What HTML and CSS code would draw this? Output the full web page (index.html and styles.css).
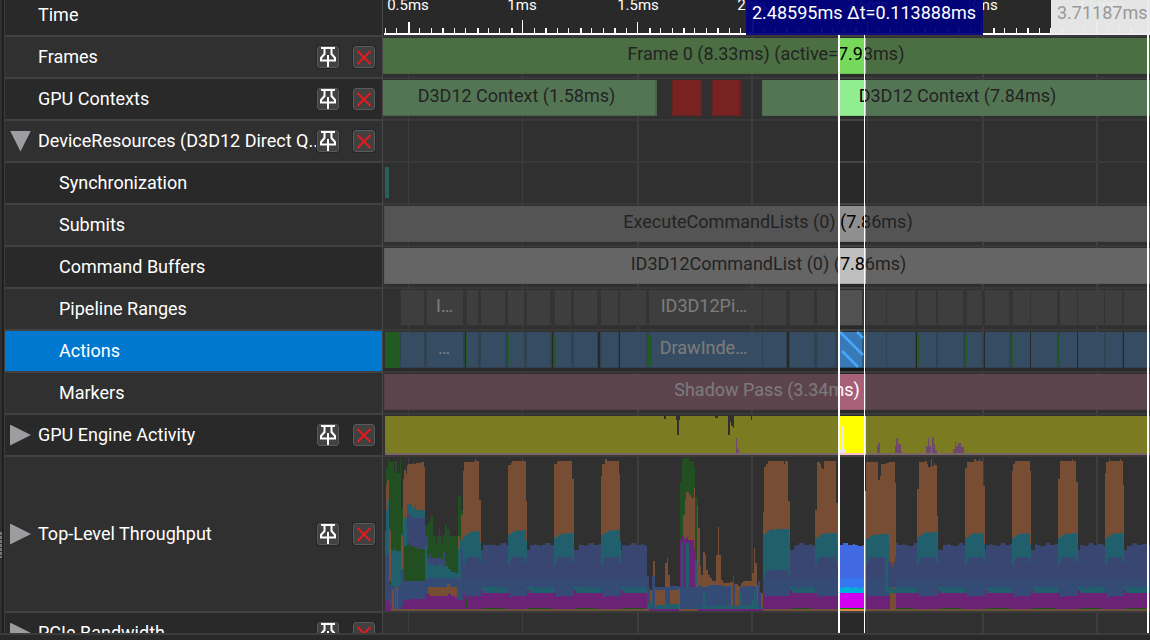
FILE: index.html
```html
<!DOCTYPE html>
<html lang="en">
<head>
<meta charset="utf-8">
<title>GPU Timeline</title>
<link rel="stylesheet" href="styles.css">
</head>
<body>
<svg class="defs" aria-hidden="true">
  <symbol id="pin" viewBox="0 0 20 20">
    <path d="M3 1h14M6.500 1.500v5.500L3 11v2.500h14V11l-3.500-4V1.500M10 8v12" fill="none" stroke="#fff" stroke-width="2"/>
  </symbol>
  <symbol id="cross" viewBox="0 0 20 20">
    <path d="M3.500 4l13 13M16.500 4L3.500 17" fill="none" stroke="#e8191c" stroke-width="2"/>
  </symbol>
</svg>
<main class="board">
  <div class="rail"><span class="grip"></span></div>
  <ul class="tree" id="tree"></ul>
  <section class="timeline">
    <svg class="grid" id="grid" preserveAspectRatio="none" viewBox="0 0 767 640"></svg>
    <div class="ruler" id="ruler"></div>
    <div class="tracks" id="tracks"></div>
    <div class="shade"><div class="dim"></div><div class="selection"></div><div class="dim"></div></div>
    <div class="cursor"></div>
    <div class="flag flag-range">2.48595ms Δt=0.113888ms</div>
    <div class="flag flag-cursor">3.71187ms</div>
  </section>
</main>
<footer class="strip"></footer>
<script src="timeline.js"></script>
</body>
</html>
```
FILE: styles.css
```css
* { box-sizing: border-box; }
body {
  margin: 0;
  height: 100vh;
  display: flex;
  flex-direction: column;
  overflow: hidden;
  background: #292929;
  color: #fff;
  font: 18px/20px Roboto, "Liberation Sans", sans-serif;
}
.defs { position: absolute; width: 0; height: 0; }
.board { flex: 1; min-height: 0; display: flex; overflow: hidden; }
.rail {
  width: 4px;
  display: flex;
  align-items: flex-end;
  background: #303030;
  border-right: 2px solid #1f1f1f;
  padding-bottom: 75px;
}
.grip { width: 2px; height: 26px; background: repeating-linear-gradient(#777 0 3px, #333 3px 4px); }
.tree {
  width: 379px;
  flex: none;
  margin: 0;
  padding: 0;
  list-style: none;
  border-left: 1px solid #3c3c3c;
  border-right: 1px solid #484848;
}
.node {
  height: 42px;
  display: flex;
  align-items: center;
  gap: 14px;
  padding: 0 7px 0 5px;
  background: #303030;
  border-bottom: 2px solid #414141;
}
.node:nth-child(odd) { background: #292929; }
.node.time { height: 37px; padding-bottom: 5px; }
.node.tall { height: 156px; }
.node.active { background: #0078d0; }
.twist {
  width: 21px;
  height: 21px;
  flex: none;
  border: 0;
  padding: 0;
  background: #9d9ca1;
  clip-path: polygon(0 0, 100% 50%, 0 100%);
}
.twist.open { clip-path: polygon(0 0, 100% 0, 50% 100%); }
.twist.none { visibility: hidden; }
.name { flex: 1; min-width: 0; margin-left: -7px; margin-right: -16px; white-space: nowrap; }
.child .name { margin-left: 14px; }
.tool {
  position: relative;
  width: 22px;
  height: 22px;
  flex: none;
  padding: 0;
  display: grid;
  background: #414141;
  border: 1px solid #5a5a5a;
  border-radius: 3px;
  box-shadow: 0 0 0 1px #262626;
}
.tool svg { width: 20px; height: 20px; }
.timeline { flex: 1; min-width: 0; position: relative; overflow: hidden; background: #292929; }
.grid { position: absolute; top: 37px; left: 0; width: 100%; height: 640px; }
.ruler { position: relative; height: 37px; background: #292929; border-bottom: 2px solid #444; }
.ruler svg { display: block; width: 100%; height: 35px; }
.tick { position: absolute; top: -5px; font-size: 15px; transform: translateX(-50%); }
.tracks { position: relative; }
.track { position: relative; height: 42px; border-bottom: 2px solid #444; }
.track.tall { height: 156px; }
.track svg { display: block; width: 100%; height: 100%; }
.caption {
  position: absolute;
  top: 1px;
  line-height: 32px;
  text-align: center;
  white-space: nowrap;
  color: #fff;
}
.caption.dark { color: #000; }
.shade {
  position: absolute;
  inset: 35px 0 0;
  display: grid;
  grid-template-columns: 455fr 28fr 284fr;
}
.dim { background: rgba(52, 52, 52, .65); }
.selection { border-left: 2px solid #fff; background: linear-gradient(#fff, #fff) right 1px top / 1px 100% no-repeat; }
.cursor { position: absolute; inset: 0 1px 0 auto; width: 2px; background: #fff; }
.flag { position: absolute; top: 0; height: 35px; padding: 3px 6px; white-space: nowrap; }
.flag-range { right: 167px; width: 237px; background: rgba(0, 0, 125, .95); }
.flag-cursor { right: 0; width: 99px; background: rgba(235, 235, 235, .97); color: #999; }
.strip { height: 7px; flex: none; background: #292929; border-top: 2px solid #3c3c3c; }
```
FILE: timeline.js
```js
const ORIGIN = 383;
const SPAN = 767;
const SVG_OPEN = (h) => `<svg viewBox="${ORIGIN} 0 ${SPAN} ${h}" preserveAspectRatio="none" shape-rendering="crispEdges">`;
const rect = (x0, x1, y0, y1, fill) => `<rect x="${x0}" y="${y0}" width="${x1 - x0}" height="${y1 - y0}" fill="${fill}"/>`;
const caption = (x0, x1, text, dark) =>
  `<span class="caption${dark ? ' dark' : ''}" style="left:${(x0 - ORIGIN) / SPAN * 100}%;width:${(x1 - x0) / SPAN * 100}%">${text}</span>`;

/* Left tree */
const nodes = [
  ['Time', 'time'], ['Frames', 'tools'], ['GPU Contexts', 'tools'],
  ['DeviceResources (D3D12 Direct Q..', 'tools open'],
  ['Synchronization', 'child'], ['Submits', 'child'], ['Command Buffers', 'child'],
  ['Pipeline Ranges', 'child'], ['Actions', 'child active'], ['Markers', 'child'],
  ['GPU Engine Activity', 'tools closed'], ['Top-Level Throughput', 'tools closed tall'], ['PCIe Bandwidth', 'tools closed']
];
document.getElementById('tree').innerHTML = nodes.map(([name, kind]) => {
  const twist = /open/.test(kind) ? 'open' : /closed/.test(kind) ? 'closed' : 'none';
  const tools = /tools/.test(kind)
    ? `<button class="tool" aria-label="Pin ${name}"><svg><use href="#pin"/></svg></button><button class="tool" aria-label="Remove ${name}"><svg><use href="#cross"/></svg></button>` : '';
  return `<li class="node ${kind}"><button class="twist ${twist}" aria-label="Toggle ${name}"></button><span class="name">${name}</span>${tools}</li>`;
}).join('');

/* Ruler and grid */
const majors = [[408, 1, '0.5ms'], [522, 1, '1ms'], [637, 2, '1.5ms'], [751, 2, '2ms'], [867, 1, '2.5ms'], [982, 2, '3ms'], [1096, 2, '3.5ms']];
document.getElementById('grid').innerHTML = majors.map(([x, w]) => rect(x - ORIGIN, x - ORIGIN + w, 0, 640, '#505050')).join('');
let ticks = rect(384, 1150, 33, 35, '#fff');
for (let i = -2; i < 65; i++) {
  const x = Math.floor(408.2 + i * 11.47);
  const y = i % 20 === 10 ? 20 : i % 10 === 0 ? 22 : 28;
  ticks += rect(x, x + (i % 3 ? 1 : 2), y, 33, '#fff');
}
document.getElementById('ruler').innerHTML = SVG_OPEN(35) + ticks + '</svg>' +
  majors.map(([x, w, t]) => `<span class="tick" style="left:${(x + w - 1 - ORIGIN) / SPAN * 100}%">${t}</span>`).join('');

/* Event tracks */
const bar = (x0, x1, fill, edge) => rect(x0, x1, 1, 37, edge) + rect(x0 + 1, x1 - 2, 1, 36, fill);
const ranges = [[401, 424], [427, 463], [467, 478], [481, 505], [508, 524], [527, 550], [555, 571], [574, 597], [601, 618], [620, 646],
  [649, 762], [763, 786], [790, 814], [817, 835], [839, 862], [866, 886], [887, 915], [918, 936], [938, 963], [967, 982], [985, 1009],
  [1013, 1030], [1031, 1057], [1060, 1077], [1078, 1104], [1105, 1122], [1124, 1150]];
const pipeline = rect(400, 1150, 1, 37, '#343434') + ranges.map(([a, b]) => rect(a, b, 1, 36, '#515151')).join('');
const darkGaps = [[465, 466], [552, 553], [598, 600], [619, 620], [787, 789], [916, 917], [984, 985], [1030, 1031], [1077, 1078], [1123, 1124]];
const greens = [[466, 467], [508, 509], [554, 556], [601, 602], [647, 652], [817, 818], [865, 866], [917, 919], [965, 967], [1012, 1013], [1058, 1060], [1105, 1106]];
const actions = rect(383, 1150, 37, 40, '#181818') + rect(385, 400, 1, 37, '#00a400') + rect(400, 1150, 1, 37, '#285980') +
  ranges.map(([a, b]) => rect(a, b, 1, 36, '#3879b8')).join('') +
  darkGaps.map(([a, b]) => rect(a, b, 1, 37, '#101010')).join('') +
  greens.map(([a, b]) => rect(a, b, 4, 35, '#00a400')).join('') +
  '<path d="M840 1L863 24M842 20L858 36M857 1L863 7" stroke="#4aa6fa" stroke-width="2.500" shape-rendering="auto"/>';

/* Stepped area: "x:top x:top ... end" filled down to base */
function steps(fill, base, text) {
  const pts = text.trim().split(/\s+/).map((p) => p.split(':').map(Number));
  let out = '';
  for (let i = 0; i < pts.length - 1; i++) {
    if (pts[i][1] < base) out += rect(pts[i][0], pts[i + 1][0], pts[i][1], base, fill);
  }
  return out;
}

/* Engine activity */
const engine = rect(385, 1150, 416, 453, '#ff0') + rect(385, 1150, 453, 455, '#ffc0cb') +
  [[664, 666, 419], [676, 680, 420], [677, 679, 435], [715, 718, 418], [728, 730, 435], [730, 734, 422], [731, 734, 426], [733, 734, 428], [751, 752, 420]]
    .map(([a, b, y]) => rect(a, b, 415, y, '#292929')).join('') +
  steps('#da70d6', 453, '736:438 737:449 739:453 877:446 878:443 880:453 895:446 896:438 898:444 901:452 902:453 926:446 928:438 929:446 931:453 932:437 934:444 935:450 937:453 953:449 955:441 956:446 958:443 961:447 964') +
  steps('#e6e6fa', 453, '838:452 840:450 841:435 842:426 844:449 845');

/* Throughput */
const C = { coral: '#f47e34', teal: '#00b0d8', indigo: '#4169e1', blue: '#3676f0', magenta: '#d400f0', green: '#008200', floor: '#d88a44' };
const towers = [
  [463, 481, '463:471 464:462 475:459 476:461 479:500 481'], [508, 527, '508:465 511:463 512:461 526:501 527'],
  [554, 574, '554:464 557:462 558:461 572:479 574'], [601, 621, '601:476 602:464 605:459 607:461 619:474 620:546 621'],
  [763, 790, '763:512 764:467 766:464 768:461 784:464 785:461 788:501 790'], [815, 838, '815:510 817:462 820:464 821:467 822:469 824:461 836:503 838'],
  [866, 890, '865:491 866:462 878:480 880:476 881:464 886:463 889:462 895:483 896'], [917, 938, '917:489 919:462 925:461 927:464 928:467 931:459 932:466 934:463 935:465 937:516 938'],
  [965, 985, '965:468 967:462 974:459 976:461 979:459 980:461 983:486 985'], [1012, 1031, '1012:471 1013:464 1015:461 1030:471 1031'],
  [1058, 1078, '1058:479 1060:461 1072:459 1073:461 1076:482 1078'], [1105, 1124, '1105:473 1106:462 1109:459 1110:461 1120:459 1121:461 1123:485 1124']
];
const stops = towers.map(([a, b]) => [a, b]);
let chart = '';
/* plateaus between towers */
for (let i = 0; i < stops.length; i++) {
  const a = stops[i][1];
  let b = i + 1 < stops.length ? stops[i + 1][0] : 1150;
  if (i === 3) b = 647;
  for (let x = a, n = i; x < b; n++) {
    const w = Math.min([2, 3, 5, 1, 4][n % 5], b - x);
    const top = x < a + 1 ? 550 : [543, 545, 545, 544, 545, 546, 545][n % 7];
    chart += rect(x, x + w, top, 611, C.indigo);
    chart += rect(x, x + w, 578, 588, C.blue) + rect(x, x + w, n % 3 ? 587 : 588, 594, C.teal);
    x += w;
  }
  chart += rect(a, b, 593, 611, C.magenta) + rect(a, a + 2, 590, 594, C.magenta) + rect(a + 1, b - 3, 608, 609, C.green);
}
towers.forEach(([a, b, shape], i) => {
  chart += steps(C.coral, 611, shape);
  const t = [532, 531, 534, 531, 530, 534, 535, 533, 534, 534, 534, 534][i];
  chart += steps(C.teal, 611, `${a}:${t + 4} ${a + 2}:${t + 3} ${a + 4}:${t + 1} ${a + 7}:${t} ${a + 8}:${t - 1} ${a + 10}:${t} ${a + 13}:${t - 1} ${b - 1}:${t + 10} ${b}`);
  const m = i === 4 ? 570 : 557;
  chart += steps(C.indigo, 596, `${a}:${m + 8} ${a + 2}:${m + 2} ${a + 4}:${m} ${a + 11}:${m + 1} ${a + 13}:${m} ${b - 2}:${m + 5} ${b}`);
  chart += rect(a + 1, b, 578, 596, C.blue);
  chart += steps(C.magenta, 611, `${a}:593 ${a + 2}:597 ${a + 4}:596 ${b}`);
});
chart += steps(C.teal, 593, '885:544 887:552 888:587 893:589 895:585 897') + steps(C.indigo, 587, '889:563 892:567 893:562 895:556 897');
/* start-up burst */
chart += steps(C.green, 611, '386:468 388:459 389:462 394:473 395:461 397:473 400:458 401:509 403:525 428:523 430:519 431:515 433:536 436:543 437:536 439:528 440:536 442:543 443:535 445:525 447:529 450:536 455:536 458:497 460:495 461:510 463') +
  rect(385, 391, 585, 611, C.blue) + rect(386, 388, 485, 512, C.coral) + rect(387, 389, 480, 530, C.coral) + rect(389, 391, 530, 581, C.coral) +
  steps(C.teal, 590, '385:531 386:510 388:500 389') + rect(389, 390, 528, 531, C.teal) + rect(385, 389, 555, 611, C.indigo) +
  steps(C.teal, 611, '391:550 395:548 396:551 401:534 404') + rect(401, 403, 536, 569, C.coral) + rect(401, 404, 569, 600, C.indigo) +
  rect(389, 403, 586, 609, C.blue) + rect(392, 394, 590, 609, C.coral) + rect(395, 398, 587, 609, C.coral) + rect(396, 397, 590, 609, C.blue) +
  steps(C.coral, 546, '403:479 404:470 406:474 407:465 408:464 413:463 414:464 416:463 421:462 424:467 425') +
  steps(C.teal, 546, '403:530 404:518 407:504 412:507 415:503 416:510 425') + steps(C.indigo, 549, '407:515 408:514 411:516 412:518 425:536 428') +
  steps(C.green, 583, '404:548 407:544 408:543 410:546 414:547 417:549 425') + steps(C.teal, 583, '425:546 427:558 428') +
  steps(C.indigo, 569, '428:558 429:554 431:558 442:560 443:551 445:562 446:570 455:569 458') +
  steps(C.teal, 579, '428:564 433:566 437:564 442:566 448:569 451:572 455:573 458:540 463') + rect(458, 460, 536, 549, C.coral) +
  rect(461, 463, 515, 540, C.coral) + rect(461, 463, 550, 600, C.indigo) +
  rect(403, 461, 581, 611, C.blue) + rect(425, 463, 578, 600, C.blue) + rect(428, 457, 587, 600, C.coral) + rect(447, 450, 584, 588, C.coral) +
  steps(C.magenta, 611, '385:600 389:605 391:609 401:606 403:600 409:599 425:594 430:596 448:594 451:596 455:598 457:600 463') +
  rect(466, 467, 598, 608, C.green);
/* quiet middle */
chart += steps(C.coral, 609, '647:590 653:561 655:588 665:563 667:558 668:575 670:588 671:590 679:587 680') +
  steps(C.indigo, 609, '647:576 649:587 650') + rect(652, 655, 576, 609, C.blue) + rect(655, 665, 587, 590, C.blue) + rect(665, 670, 587, 609, C.blue) + rect(670, 679, 586, 590, C.blue) +
  steps(C.teal, 609, '647:603 651:600 653:608 656:605 665:602 667:600 668:604 679') +
  steps(C.green, 587, '680:483 682:459 684:458 689:461 691:462 694:467 695:497 698') +
  steps(C.coral, 609, '683:515 685:500 686:492 689:495 691:498 694:488 695:560 697:506 698:528 700:566 701:575 703:552 705:555 706:570 708:575 710:578 712:581 716:555 718:527 719:555 721:580 723:583 730:582 734:584 738:586 741:583 743:581 752:573 754:548 755:563 757:585 758:593 763') +
  steps(C.magenta, 587, '680:540 682:536 684:539 686:537 688:540 694:549 696') + rect(682, 683, 542, 587, C.teal) + rect(686, 689, 543, 587, C.teal) + rect(695, 697, 560, 585, C.teal) +
  steps(C.blue, 609, '680:587 698:585 702:587 708:585 722:586 731:609 740:587 743:586 755:587 757:609') +
  steps(C.indigo, 609, '733:576 734:584 735:609 758:581 760:592 761') +
  steps(C.teal, 609, '698:607 703:592 705:601 706:606 718:604 721:606 739:592 742:605 752:600 754:590 756:603 758:607 763') +
  rect(649, 679, 609, 611, C.magenta) + rect(698, 763, 609, 611, C.magenta);
chart += rect(391, 649, 609, 611, C.floor) + rect(679, 698, 609, 611, C.floor) + rect(763, 1150, 609, 611, C.floor);

const chartSvg = (top, h, body) =>
  `<svg viewBox="${ORIGIN} ${top} ${SPAN} ${h}" preserveAspectRatio="none" shape-rendering="crispEdges">${body}</svg>`;
const tracks = [
  SVG_OPEN(40) + bar(382, 1152, '#76d95c', '#6cc454') + '</svg>' + caption(383, 1149, 'Frame 0 (8.33ms) (active=7.93ms)', true),
  SVG_OPEN(40) + bar(382, 657, '#90ee90', '#70c070') + bar(672, 702, '#f50000', '#c00') + bar(712, 741, '#f50000', '#c00') + bar(762, 1152, '#90ee90', '#80d480') + '</svg>' +
    caption(376, 657, 'D3D12 Context (1.58ms)', true) + caption(764, 1151, 'D3D12 Context (7.84ms)', true),
  SVG_OPEN(40) + '</svg>',
  SVG_OPEN(40) + rect(385, 389, 4, 35, '#18b0b0') + '</svg>',
  SVG_OPEN(40) + bar(384, 1152, '#8f8f8f', '#828282') + '</svg>' + caption(386, 1150, 'ExecuteCommandLists (0) (7.86ms)', true),
  SVG_OPEN(40) + bar(384, 1152, '#bfbfbf', '#aaa') + '</svg>' + caption(387, 1150, 'ID3D12CommandList (0) (7.86ms)', true),
  SVG_OPEN(40) + pipeline + '</svg>' + caption(427, 462, 'I…') + caption(649, 759, 'ID3D12Pi…'),
  SVG_OPEN(40) + actions + '</svg>' + caption(427, 461, '…') + caption(648, 759, 'DrawInde…'),
  SVG_OPEN(40) + bar(384, 1152, '#a86079', '#96566c') + '</svg>' + caption(384, 1150, 'Shadow Pass (3.34ms)'),
  chartSvg(415, 40, engine), chartSvg(457, 154, chart), ''
];
document.getElementById('tracks').innerHTML = tracks.map((t, i) => `<div class="track${i === 10 ? ' tall' : ''}">${t}</div>`).join('');
```
